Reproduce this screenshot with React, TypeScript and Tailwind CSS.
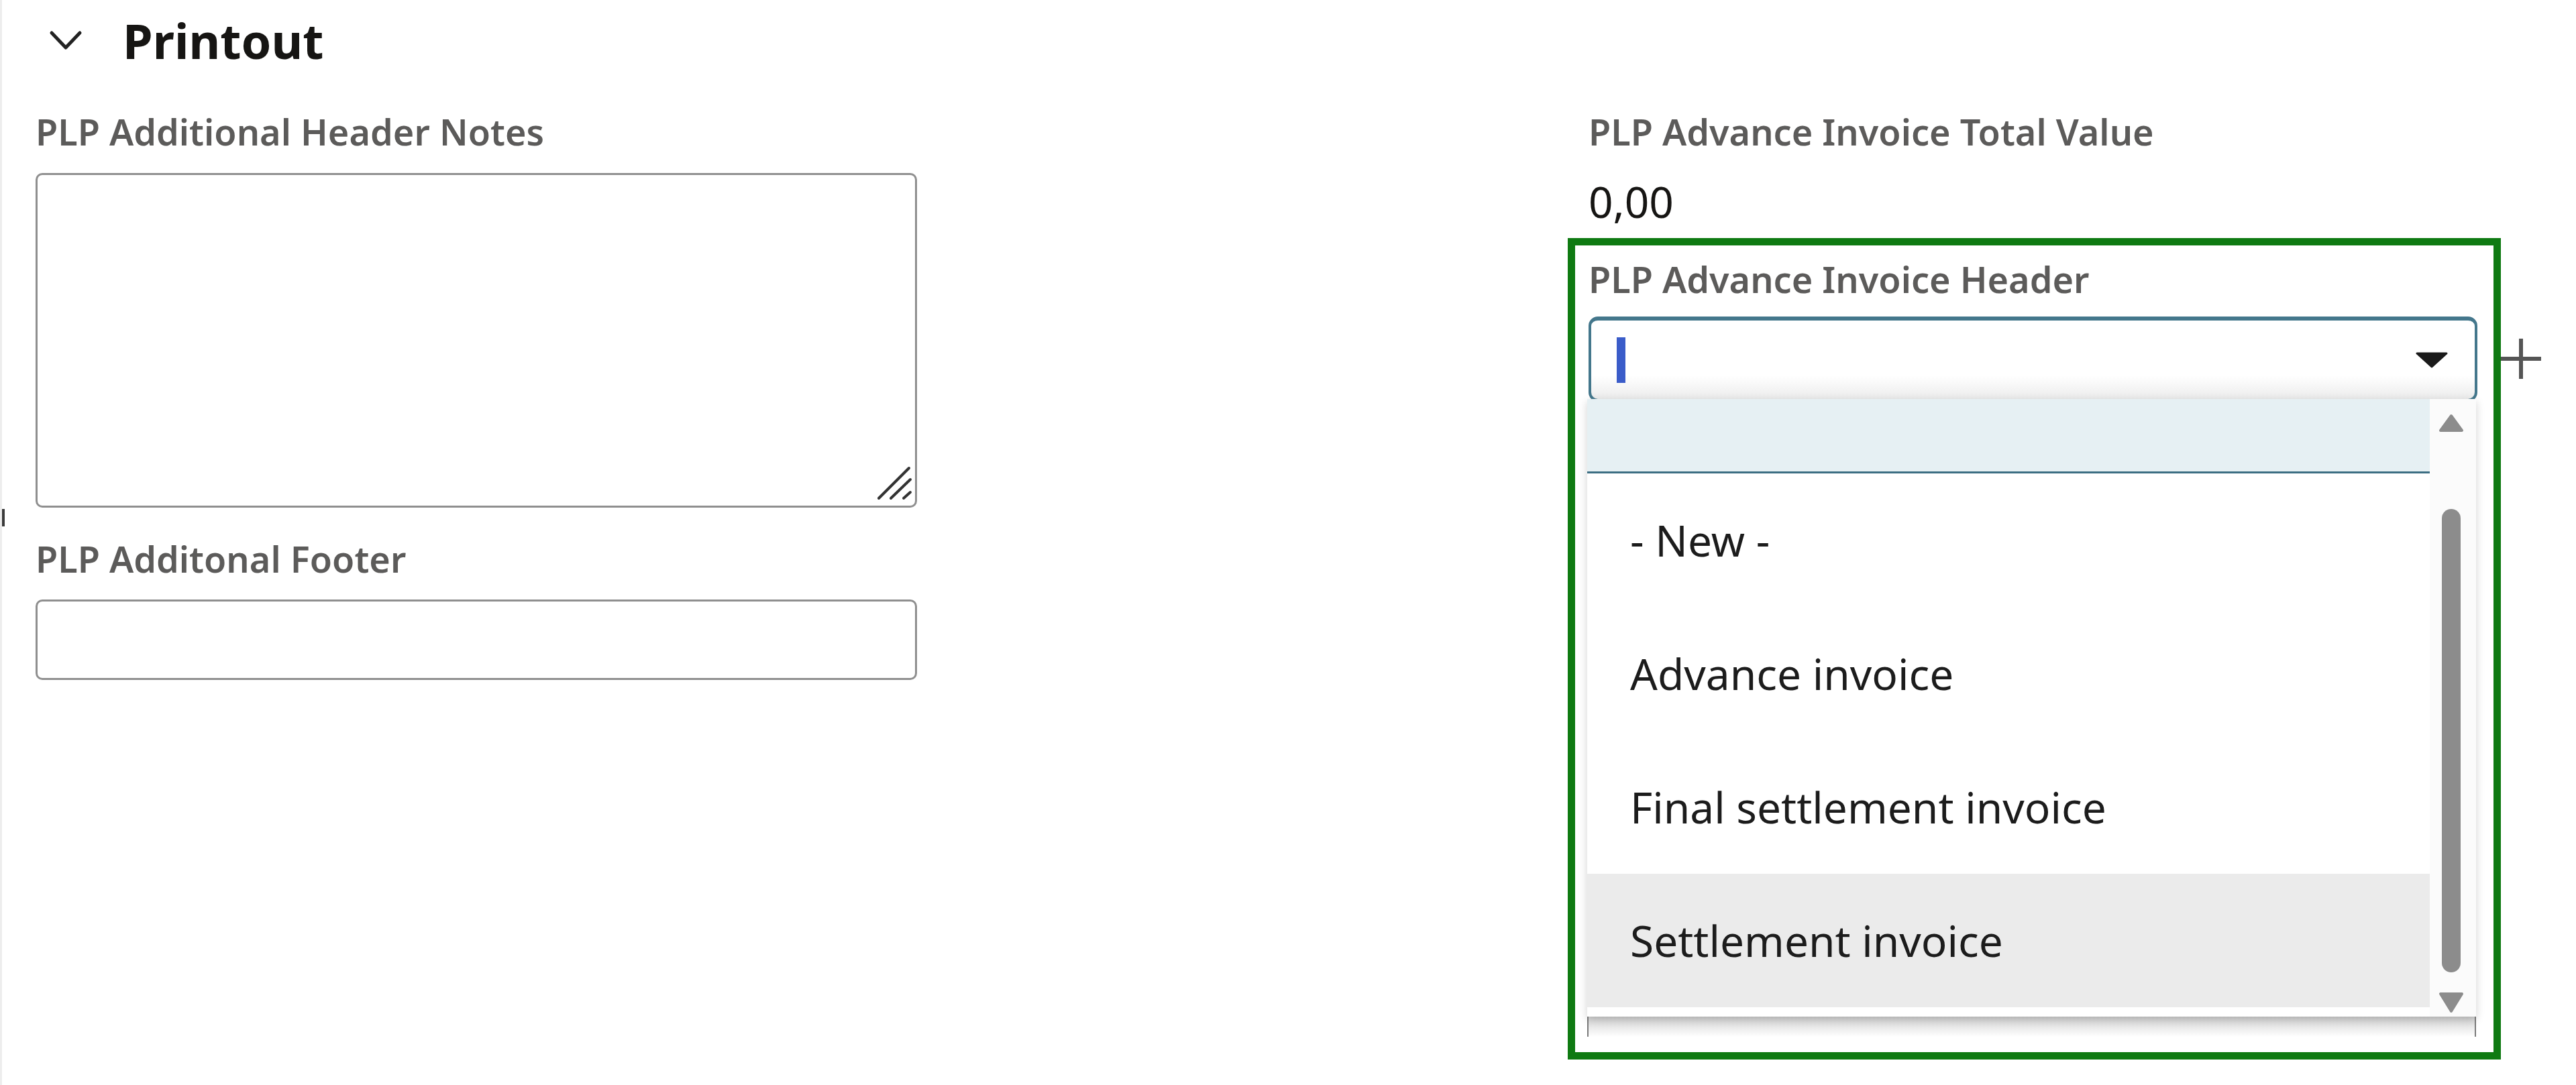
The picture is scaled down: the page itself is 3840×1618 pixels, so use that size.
import React from "react";

function Label({ children, className = "" }: { children: React.ReactNode; className?: string }) {
  return (
    <div className={`text-[54px] leading-[54px] font-semibold text-[#5c5b5a] whitespace-nowrap ${className}`}>
      {children}
    </div>
  );
}

const items = ["- New -", "Advance invoice", "Final settlement invoice", "Settlement invoice"];

export default function App() {
  return (
    <div className="relative h-[1618px] w-[3840px] overflow-hidden bg-white font-['Noto_Sans',sans-serif] border-l-[3px] border-l-[#ededed]">
      <div className="absolute left-0 top-[759px] h-[26px] w-[4px] bg-[#3a3a3a]" />

      {/* Section header */}
      <div className="mt-[24px] ml-[70px] flex h-[72px] items-center">
        <svg width="50" height="30" viewBox="0 0 50 30">
          <polyline points="4,4 25,26 46,4" fill="none" stroke="#222" strokeWidth="5" strokeLinecap="round" strokeLinejoin="round" />
        </svg>
        <span className="ml-[60px] text-[72px] leading-[72px] font-bold text-[#161513]">Printout</span>
      </div>

      <div className="mt-[73px] ml-[50px] flex">
        {/* Left column */}
        <div className="flex w-[1314px] flex-col">
          <Label>PLP Additional Header Notes</Label>
          <div className="relative mt-[35px] h-[499px] rounded-[10px] border-[3px] border-[#8f8f8f] bg-white">
            <svg className="absolute right-[2px] bottom-[6px]" width="57" height="54" viewBox="0 0 57 54">
              <line x1="5" y1="49" x2="50" y2="4" stroke="#333" strokeWidth="4" strokeLinecap="round" />
              <line x1="23" y1="49" x2="52" y2="21" stroke="#333" strokeWidth="4" strokeLinecap="round" />
              <line x1="42" y1="49" x2="52" y2="40" stroke="#333" strokeWidth="4" strokeLinecap="round" />
            </svg>
          </div>
          <Label className="mt-[49px]">PLP Additonal Footer</Label>
          <div className="mt-[34px] h-[120px] rounded-[10px] border-[3px] border-[#8f8f8f] bg-white" />
        </div>

        {/* Right column */}
        <div className="ml-[970px] flex flex-col">
          <Label className="pl-[31px]">PLP Advance Invoice Total Value</Label>
          <div className="mt-[46px] pl-[31px] text-[64px] leading-[64px] text-[#161513]">0,00</div>

          <div className="mt-[22px] flex items-start">
            <div className="flex w-[1391px] flex-col border-[11px] border-[#0f7a12] pt-[23px] pl-[20px] pr-[24px] pb-[23px]">
              <Label>PLP Advance Invoice Header</Label>

              {/* Select input */}
              <div className="mt-[29px] flex h-[127px] items-center justify-between rounded-[14px] border-[4px] border-t-[6px] border-[#44778c] bg-[linear-gradient(to_bottom,#ffffff_70%,#ececec)]">
                <div className="ml-[38px] h-[68px] w-[13px] bg-[#3a5cc9]" />
                <svg className="mr-[39px]" width="50" height="24" viewBox="0 0 50 24">
                  <path d="M3 2 H47 L25 22 Z" fill="#1a1a1a" stroke="#1a1a1a" strokeWidth="3" strokeLinejoin="round" />
                </svg>
              </div>

              {/* Dropdown list */}
              <div className="relative z-10 -mt-[4px] -ml-[2px] mr-[2px] flex bg-white shadow-[0_4px_12px_rgba(0,0,0,0.18)]">
                <div className="flex flex-1 flex-col pb-[14px]">
                  <div className="h-[111px] border-b-[3px] border-[#3c6e83] bg-[#e6f0f3]" />
                  {items.map((t, i) => (
                    <div
                      key={t}
                      className={`flex h-[199px] items-center pl-[64px] text-[64px] leading-[64px] text-[#1c1c1c] whitespace-nowrap ${i === 3 ? "bg-[#ebebeb]" : ""}`}
                    >
                      {t}
                    </div>
                  ))}
                </div>
                <div className="flex w-[69px] flex-col items-center pr-[5px] pb-[5px] bg-[#fbfbfb]">
                  <svg className="mt-[22px]" width="38" height="28" viewBox="0 0 38 28">
                    <path d="M19 3 L35 25 H3 Z" fill="#8c8c8c" stroke="#8c8c8c" strokeWidth="4" strokeLinejoin="round" />
                  </svg>
                  <div className="mt-[114px] h-[691px] w-[28px] rounded-full bg-[#8c8c8c]" />
                  <svg className="mt-[29px]" width="38" height="32" viewBox="0 0 38 32">
                    <path d="M3 3 H35 L19 29 Z" fill="#8c8c8c" stroke="#8c8c8c" strokeWidth="4" strokeLinejoin="round" />
                  </svg>
                </div>
              </div>
              <div className="-ml-[2px] mr-[2px] h-[30px] border-x-[2px] border-[#7a7a7a] bg-[linear-gradient(to_bottom,#d2d2d2,#ffffff)]" />
            </div>

            <svg className="mt-[150px]" width="60" height="60" viewBox="0 0 60 60">
              <line x1="0" y1="30" x2="60" y2="30" stroke="#555" strokeWidth="6" />
              <line x1="30" y1="0" x2="30" y2="60" stroke="#555" strokeWidth="6" />
            </svg>
          </div>
        </div>
      </div>
    </div>
  );
}
